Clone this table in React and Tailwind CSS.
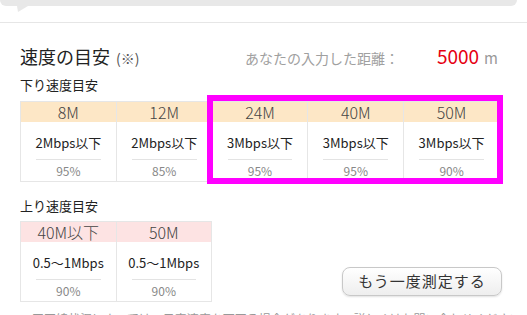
import React from "react";

const downSpeeds = [
  { plan: "8M", speed: "2Mbps以下", rate: "95%" },
  { plan: "12M", speed: "2Mbps以下", rate: "85%" },
  { plan: "24M", speed: "3Mbps以下", rate: "95%" },
  { plan: "40M", speed: "3Mbps以下", rate: "95%" },
  { plan: "50M", speed: "3Mbps以下", rate: "90%" },
];

const upSpeeds = [
  { plan: "40M以下", speed: "0.5〜1Mbps", rate: "90%" },
  { plan: "50M", speed: "0.5〜1Mbps", rate: "90%" },
];

const SpeedColumn = ({ item, headerClass, first }) => (
  <div className={`flex-1 flex flex-col ${first ? "" : "border-l border-[#e6e6e6]"}`}>
    <div
      className={`h-[20px] flex items-center justify-center text-[16px] leading-[20px] font-light text-[#444] ${headerClass}`}
    >
      {item.plan}
    </div>
    <div className="h-[59px] flex flex-col bg-white">
      <div className="pt-[12px] text-center text-[13px] leading-[18px] text-[#222]">
        {item.speed}
      </div>
      <div className="mx-[15px] mt-[7px] h-px bg-[#e3e3e3]" />
      <div className="mt-[3px] text-center text-[12px] leading-[16px] text-[#888]">
        {item.rate}
      </div>
    </div>
  </div>
);

const App = () => {
  return (
    <div
      className="w-[527px] h-[315px] overflow-hidden bg-white"
      style={{ fontFamily: '"Noto Sans CJK JP", "Noto Sans", sans-serif' }}
    >
      {/* Top bubble */}
      <div className="w-[517px] h-[6px] bg-[#e8e8e8] rounded-b-[6px]" />
      <svg className="block ml-[17px]" width="11" height="6" viewBox="0 0 11 6">
        <polygon points="0,0 11,0 1,6" fill="#e8e8e8" />
      </svg>
      <div className="mt-[10px] border-t border-[#e6e6e6]" />

      <div className="px-[20px]">
        {/* Heading */}
        <div className="mt-[21px] h-[24px] flex items-baseline justify-between pr-[9px]">
          <div className="flex items-baseline">
            <span className="text-[18px] leading-[24px] text-[#222]">速度の目安</span>
            <span className="ml-[6px] text-[14px] text-[#555]">(※)</span>
          </div>
          <div className="flex items-baseline">
            <span className="text-[14px] text-[#a0a0a0]">あなたの入力した距離：</span>
            <span className="ml-[38px] text-[19px] leading-[24px] text-[#e60012]">5000</span>
            <span className="ml-[5px] text-[15px] text-[#999]">m</span>
          </div>
        </div>

        <div className="mt-[8px] text-[13px] leading-[18px] text-[#222]">下り速度目安</div>

        {/* Download table */}
        <div className="relative mt-[7px] w-[480px]">
          <div className="flex border border-[#e6e6e6]">
            {downSpeeds.map((item, i) => (
              <SpeedColumn key={item.plan} item={item} first={i === 0} headerClass="bg-[#fde7c6]" />
            ))}
          </div>
          <div className="absolute left-[187px] top-[-6px] w-[296px] h-[89px] border-[6px] border-[#ff00ff]" />
        </div>

        <div className="mt-[15px] text-[13px] leading-[18px] text-[#222]">上り速度目安</div>

        {/* Upload table + button */}
        <div className="mt-[6px] flex items-end justify-between w-[482px]">
          <div className="flex w-[192px] border border-[#e6e6e6]">
            {upSpeeds.map((item, i) => (
              <SpeedColumn key={item.plan} item={item} first={i === 0} headerClass="bg-[#fde3e3]" />
            ))}
          </div>
          <button
            type="button"
            className="mb-[6px] w-[160px] h-[29px] rounded-[8px] border border-[#c8c8c8] bg-gradient-to-b from-white to-[#eeeeee] shadow-[0_1px_2px_rgba(0,0,0,0.12)] text-[15px] text-[#333] tracking-[1px]"
          >
            もう一度測定する
          </button>
        </div>

        <p className="mt-[8px] ml-[12px] text-[12px] leading-[18px] text-[#999] whitespace-nowrap">
          ■回線状況によっては、目安速度を下回る場合があります。詳しくはお問い合わせください。
        </p>
      </div>
    </div>
  );
};

export default App;
